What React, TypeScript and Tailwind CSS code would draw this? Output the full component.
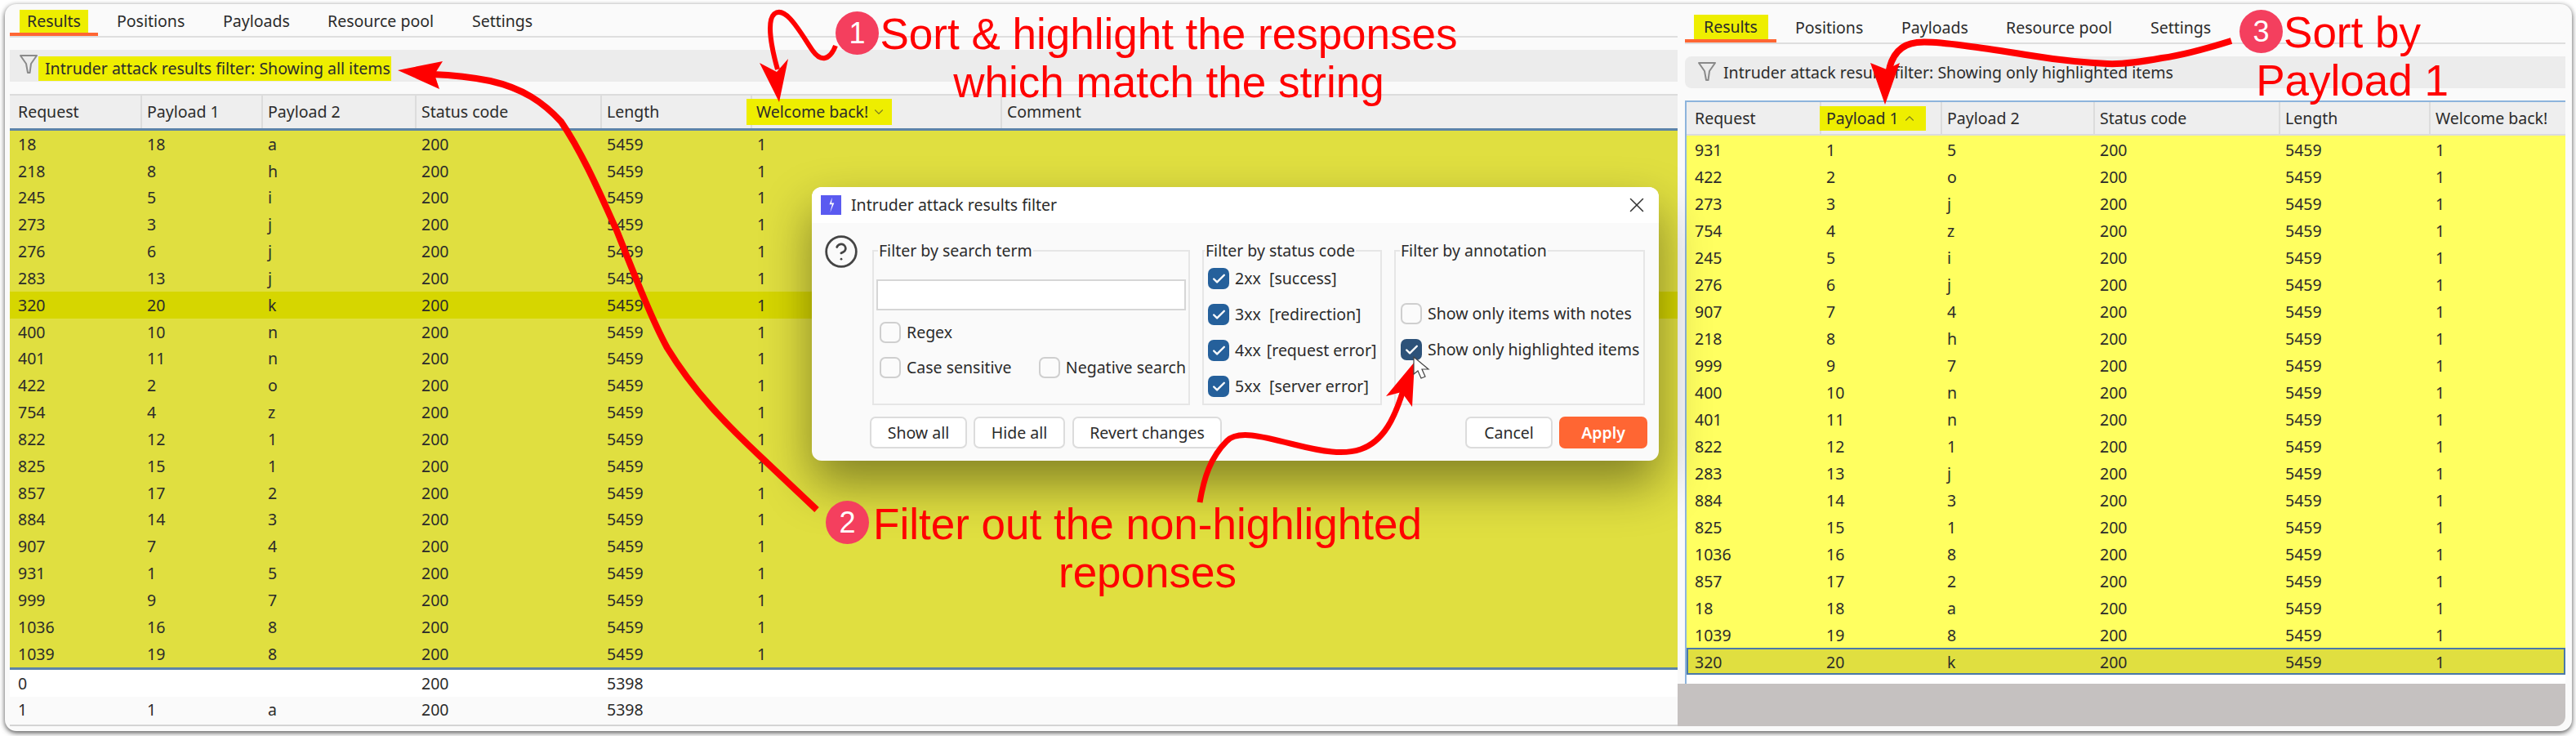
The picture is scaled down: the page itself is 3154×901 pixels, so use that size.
import { Check, ChevronDown, ChevronUp, CircleHelp, X } from "lucide-react";
import type { ReactNode } from "react";

const leftRows = [
  ["18", "18", "a"], ["218", "8", "h"], ["245", "5", "i"], ["273", "3", "j"], ["276", "6", "j"],
  ["283", "13", "j"], ["320", "20", "k"], ["400", "10", "n"], ["401", "11", "n"], ["422", "2", "o"],
  ["754", "4", "z"], ["822", "12", "1"], ["825", "15", "1"], ["857", "17", "2"], ["884", "14", "3"],
  ["907", "7", "4"], ["931", "1", "5"], ["999", "9", "7"], ["1036", "16", "8"], ["1039", "19", "8"],
];

const rightRows = [
  ["931", "1", "5"], ["422", "2", "o"], ["273", "3", "j"], ["754", "4", "z"], ["245", "5", "i"],
  ["276", "6", "j"], ["907", "7", "4"], ["218", "8", "h"], ["999", "9", "7"], ["400", "10", "n"],
  ["401", "11", "n"], ["822", "12", "1"], ["283", "13", "j"], ["884", "14", "3"], ["825", "15", "1"],
  ["1036", "16", "8"], ["857", "17", "2"], ["18", "18", "a"], ["1039", "19", "8"],
];

const leftCols = "grid grid-cols-[162px_148px_188px_227px_184px_306px_1fr]";
const rightCols = "grid grid-cols-[165px_148px_187px_227px_184px_1fr]";

function Tabs({ className, tab, mark }: { className: string; tab: string; mark: string }) {
  return (
    <div className={`flex items-center border-b-2 border-[#dedede] ${className}`}>
      <div className={`flex h-full items-end justify-center border-b-4 border-[#ff6633] ${tab}`}>
        <span className={`flex items-center justify-center bg-[#eeee00] ${mark}`}>Results</span>
      </div>
      <span className="ml-[23px] w-[130px]">Positions</span>
      <span className="w-[128px]">Payloads</span>
      <span className="w-[177px]">Resource pool</span>
      <span>Settings</span>
    </div>
  );
}

function Funnel2({ className }: { className: string }) {
  return (
    <svg viewBox="0 0 24 24" fill="none" stroke="#8a8a8a" strokeWidth="2" className={className}>
      <path d="M2 2 H22 L15 12 L13.5 23 H11 L9 12 Z" strokeLinejoin="round" />
    </svg>
  );
}

function Cell({ children, first }: { children?: ReactNode; first?: boolean }) {
  return <div className={first ? "pl-[10px]" : "pl-[6px]"}>{children}</div>;
}

function HeadCell({ children, first, last }: { children?: ReactNode; first?: boolean; last?: boolean }) {
  return (
    <div className={`flex h-full items-center ${first ? "pl-[10px]" : "pl-[6px]"} ${last ? "" : "border-r-2 border-[#dcdcdc]"}`}>
      {children}
    </div>
  );
}

function Check2({ on, dark }: { on?: boolean; dark?: boolean }) {
  if (!on) return <div className="h-[26px] w-[26px] shrink-0 rounded-[7px] border-2 border-[#cfcfcf] bg-[#fbfbfb]" />;
  return (
    <div className={`flex h-[26px] w-[26px] shrink-0 items-center justify-center rounded-[7px] ${dark ? "bg-[#2d5279]" : "bg-[#25609b]"}`}>
      <Check className="h-[19px] w-[19px] text-white" strokeWidth={3} />
    </div>
  );
}

function Opt({ label, code, on, dark, className = "" }: { label: string; code?: string; on?: boolean; dark?: boolean; className?: string }) {
  return (
    <div className={`flex items-center gap-[7px] whitespace-nowrap ${className}`}>
      <Check2 on={on} dark={dark} />
      {code && <span className="w-[35px]">{code}</span>}
      <span>{label}</span>
    </div>
  );
}

function Group({ title, className, legend, children }: { title: string; className: string; legend: string; children: ReactNode }) {
  return (
    <fieldset className={`h-[202px] min-w-0 shrink-0 border-2 border-[#e6e6e6] ${className}`}>
      <legend className={`px-[1px] leading-[26px] ${legend}`}>{title}</legend>
      {children}
    </fieldset>
  );
}

function Btn({ children, className = "" }: { children: ReactNode; className?: string }) {
  return (
    <div className={`flex h-[39px] items-center justify-center rounded-[7px] border-2 border-[#dcdcdc] bg-white ${className}`}>
      {children}
    </div>
  );
}

function FilterDialog() {
  return (
    <div className="absolute left-[994px] top-[229px] h-[335px] w-[1037px] overflow-hidden rounded-[12px] bg-[#fafafa] shadow-[0_28px_60px_rgba(0,0,0,0.42)]">
      <div className="flex h-[44px] items-center bg-white pl-[11px] pr-[12px]">
        <div className="flex h-[24px] w-[25px] items-center justify-center bg-[#5a5af0]">
          <svg viewBox="0 0 12 24" className="h-[20px] w-[10px]">
            <path d="M7 1 L3 11 L7 11 L4 23 L10 9 L6 9 Z" fill="#fff" />
          </svg>
        </div>
        <span className="ml-[12px]">Intruder attack results filter</span>
        <X className="ml-auto h-[30px] w-[30px] text-[#333]" strokeWidth={1.2} />
      </div>
      <div className="flex pl-[14px] pt-[21px]">
        <CircleHelp className="mt-[-8px] h-[44px] w-[44px] text-[#444]" strokeWidth={1.5} />
        <div className="ml-[16px] flex gap-[15px]">
          <Group title="Filter by search term" className="w-[389px] px-[3px]" legend="ml-[2px]">
            <div className="mt-[22px] h-[38px] border-2 border-[#d6d6d6] bg-white" />
            <Opt label="Regex" className="ml-[4px] mt-[14px]" />
            <div className="ml-[4px] mt-[17px] flex">
              <Opt label="Case sensitive" className="w-[196px]" />
              <Opt label="Negative search" />
            </div>
          </Group>
          <Group title="Filter by status code" className="w-[220px] px-[5px]" legend="ml-[-4px]">
            <div className="mt-[8px] flex flex-col gap-[18px]">
              <Opt on code="2xx" label="[success]" />
              <Opt on code="3xx" label="[redirection]" />
              <Opt on code="4xx" label="[request error]" />
              <Opt on code="5xx" label="[server error]" />
            </div>
          </Group>
          <Group title="Filter by annotation" className="w-[307px] px-[6px]" legend="ml-[-1px]">
            <div className="mt-[51px] flex flex-col gap-[18px]">
              <Opt label="Show only items with notes" />
              <Opt on dark label="Show only highlighted items" />
            </div>
          </Group>
        </div>
      </div>
      <div className="mt-[14px] flex pl-[71px] pr-[14px]">
        <Btn className="w-[119px]">Show all</Btn>
        <Btn className="ml-[8px] w-[112px]">Hide all</Btn>
        <Btn className="ml-[9px] w-[183px]">Revert changes</Btn>
        <Btn className="ml-auto w-[107px]">Cancel</Btn>
        <div className="ml-[8px] flex h-[39px] w-[108px] items-center justify-center rounded-[7px] bg-[#ff6633] font-semibold text-white">
          Apply
        </div>
      </div>
    </div>
  );
}

function Badge({ n, className }: { n: number; className: string }) {
  return (
    <div className={`absolute flex h-[53px] w-[53px] items-center justify-center rounded-full bg-[#f43f5e] text-[36px] text-white font-['Liberation_Sans',sans-serif] ${className}`}>
      {n}
    </div>
  );
}

function Note({ children, className }: { children: ReactNode; className: string }) {
  return (
    <div className={`absolute whitespace-nowrap text-center text-[53px] leading-[59px] text-[#ff0000] font-['Liberation_Sans',sans-serif] ${className}`}>
      {children}
    </div>
  );
}

function Arrows() {
  return (
    <svg className="absolute left-0 top-0 h-[901px] w-[3154px]" viewBox="0 0 3154 901" fill="none">
      <g stroke="#ff0000" strokeLinejoin="round">
        <path strokeWidth="6" d="M1023 56 C1016 74 1005 76 995 62 C980 40 962 6 948 17 C938 26 945 60 952 85" />
        <path strokeWidth="8" d="M1000 624 L928 556 C890 520 850 480 817 426 C800 395 780 345 755 282 C738 245 715 190 687 149 C665 125 640 108 600 99 C575 94 555 92 530 91" />
        <path strokeWidth="7" d="M1469 615 C1474 585 1482 560 1502 540 C1515 526 1545 534 1584 544 C1620 553 1645 557 1666 550 C1695 540 1708 510 1718 478" />
        <path strokeWidth="8" d="M2732 50 C2700 60 2670 68 2647 71 C2620 76 2600 79 2580 78 C2540 76 2510 72 2480 67 C2450 62 2430 59 2413 57 C2390 54 2365 50 2347 52 C2328 54 2316 66 2312 90" />
      </g>
      <g fill="#ff0000">
        <path d="M954 125 L930 77 L951 88 L965 72 Z" />
        <path d="M487 86 L542 75 L532 91 L538 109 Z" />
        <path d="M1732 443 L1697 485 L1716 480 L1729 498 Z" />
        <path d="M2308 128 L2290 77 L2310 85 L2326 77 Z" />
      </g>
      <path d="M1731 437 L1731 458 L1736 454 L1740 463 L1745 461 L1741 452 L1749 452 Z" fill="#fff" stroke="#444" strokeWidth="1.2" />
    </svg>
  );
}

export default function App() {
  return (
    <div className="relative h-[901px] w-[3154px] overflow-hidden bg-white text-[19.5px] leading-none text-[#2b2b2b] font-['Noto_Sans',sans-serif]">
      <div className="ml-[6px] mt-[5px] flex h-[890px] w-[3143px] overflow-hidden rounded-[14px] bg-[#fafafa] shadow-[0_2px_6px_rgba(0,0,0,0.7)]">
        {/* left window */}
        <div className="ml-[6px] w-[2042px] shrink-0">
          <Tabs className="h-[41px] pt-[2px]" tab="w-[108px]" mark="h-[28px] w-[84px]" />
          <div className="mt-[15px] flex h-[39px] items-center bg-[#ececec]">
            <Funnel2 className="ml-[11px] mt-[-6px] h-[24px] w-[24px]" />
            <span className="mt-[6px] flex h-[30px] w-[432px] items-center bg-[#eeee00] pl-[8px]">
              Intruder attack results filter: Showing all items
            </span>
          </div>
          <div className={`mt-[15px] h-[45px] items-center border-b-[3px] border-t-2 border-b-[#5d84a8] border-t-[#dcdcdc] bg-[#eeeeee] ${leftCols}`}>
            <HeadCell first>Request</HeadCell>
            <HeadCell>Payload 1</HeadCell>
            <HeadCell>Payload 2</HeadCell>
            <HeadCell>Status code</HeadCell>
            <HeadCell>Length</HeadCell>
            <HeadCell>
              <span className="ml-[-13px] flex h-[32px] w-[178px] items-center gap-[4px] bg-[#eeee00] pl-[12px]">
                Welcome back!
                <ChevronDown className="h-[18px] w-[18px] shrink-0 text-[#7d7d20]" strokeWidth={1.5} />
              </span>
            </HeadCell>
            <HeadCell last>Comment</HeadCell>
          </div>
          <div className="border-b-[3px] border-[#5d84a8] bg-[#e0df40]">
            {leftRows.map((r) => (
              <div key={r[0]} className={`h-[32.85px] items-center ${leftCols} ${r[0] === "320" ? "bg-[#d6d600]" : ""}`}>
                <Cell first>{r[0]}</Cell>
                <Cell>{r[1]}</Cell>
                <Cell>{r[2]}</Cell>
                <Cell>200</Cell>
                <Cell>5459</Cell>
                <Cell>1</Cell>
                <Cell />
              </div>
            ))}
          </div>
          <div className={`h-[33px] items-center bg-white ${leftCols}`}>
            <Cell first>0</Cell>
            <Cell />
            <Cell />
            <Cell>200</Cell>
            <Cell>5398</Cell>
          </div>
          <div className={`h-[36px] items-center border-b-2 border-[#d4d4d4] bg-[#fafafa] pb-[3px] ${leftCols}`}>
            <Cell first>1</Cell>
            <Cell>1</Cell>
            <Cell>a</Cell>
            <Cell>200</Cell>
            <Cell>5398</Cell>
          </div>
        </div>

        {/* right window */}
        <div className="mr-[8px] flex min-w-0 flex-1 flex-col">
          <Tabs className="ml-[9px] h-[49px] pt-[10px]" tab="w-[112px]" mark="h-[30px] w-[91px]" />
          <div className="ml-[9px] mt-[15px] flex h-[39px] shrink-0 items-center rounded-l-[8px] bg-[#ececec]">
            <Funnel2 className="ml-[15px] mt-[-4px] h-[24px] w-[24px]" />
            <span className="ml-[8px]">Intruder attack results filter: Showing only highlighted items</span>
          </div>
          <div className="ml-[9px] mt-[15px] flex flex-1 flex-col border-l-2 border-t-2 border-[#8db4dc] bg-white">
            <div className={`h-[41px] shrink-0 items-center border-b-2 border-[#dcdcdc] bg-[#eeeeee] ${rightCols}`}>
              <HeadCell first>Request</HeadCell>
              <HeadCell>
                <span className="ml-[-8px] flex h-[30px] w-[130px] items-center gap-[4px] bg-[#eeee00] pl-[8px]">
                  Payload 1
                  <ChevronUp className="h-[18px] w-[18px] shrink-0 text-[#7d7d20]" strokeWidth={1.5} />
                </span>
              </HeadCell>
              <HeadCell>Payload 2</HeadCell>
              <HeadCell>Status code</HeadCell>
              <HeadCell>Length</HeadCell>
              <HeadCell last>Welcome back!</HeadCell>
            </div>
            <div className="bg-[#ffff60]">
              {rightRows.map((r) => (
                <div key={r[0]} className={`h-[33px] items-center pt-[3px] ${rightCols}`}>
                  <Cell first>{r[0]}</Cell>
                  <Cell>{r[1]}</Cell>
                  <Cell>{r[2]}</Cell>
                  <Cell>200</Cell>
                  <Cell>5459</Cell>
                  <Cell>1</Cell>
                </div>
              ))}
            </div>
            <div className={`h-[33px] items-center bg-[#e0df40] pt-[3px] ring-2 ring-inset ring-[#4a78a8] ${rightCols}`}>
              <Cell first>320</Cell>
              <Cell>20</Cell>
              <Cell>k</Cell>
              <Cell>200</Cell>
              <Cell>5459</Cell>
              <Cell>1</Cell>
            </div>
          </div>
          <div className="mb-[6px] h-[52px] shrink-0 rounded-br-[12px] bg-[#c5c1c0]" />
        </div>
      </div>

      <FilterDialog />
      <Arrows />

      <Badge n={1} className="left-[1023px] top-[14px]" />
      <Note className="left-[1071px] top-[12px] w-[720px]">
        Sort &amp; highlight the responses
        <br />
        which match the string
      </Note>
      <Badge n={2} className="left-[1011px] top-[613px]" />
      <Note className="left-[1045px] top-[612px] w-[720px]">
        Filter out the non-highlighted
        <br />
        reponses
      </Note>
      <Badge n={3} className="left-[2742px] top-[12px]" />
      <Note className="left-[2730px] top-[10px] w-[300px]">
        Sort by
        <br />
        Payload 1
      </Note>
    </div>
  );
}
